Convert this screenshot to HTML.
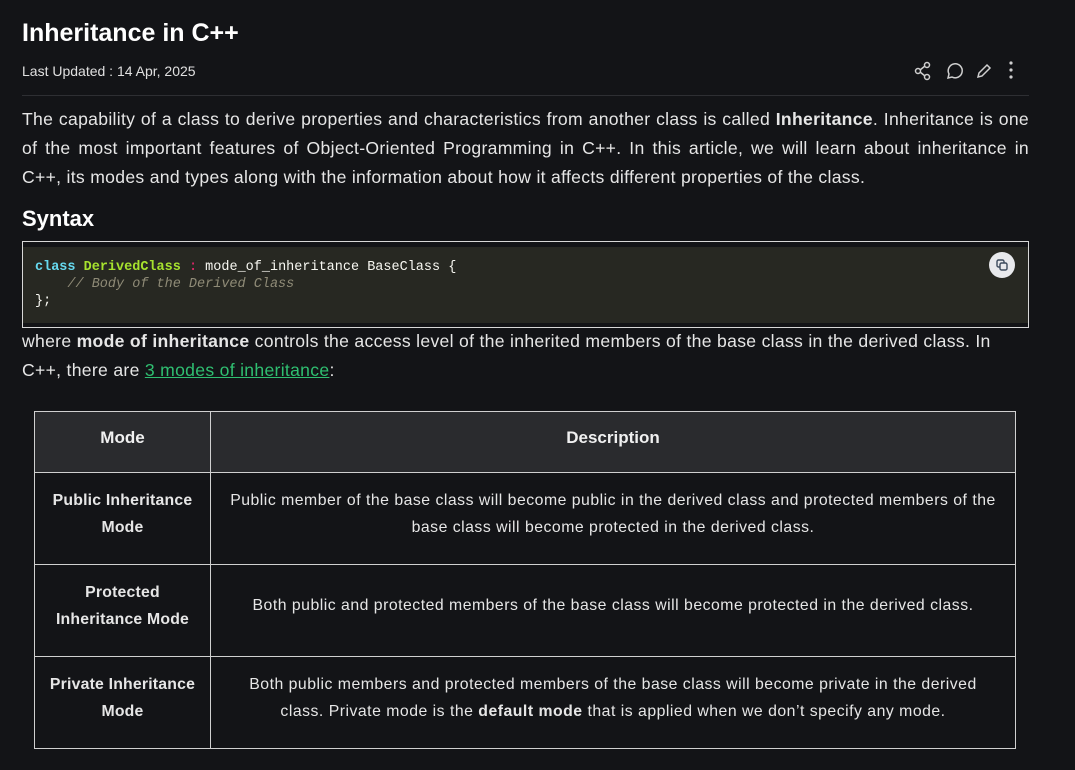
<!DOCTYPE html>
<html><head><meta charset="utf-8"><style>
*{margin:0;padding:0;box-sizing:border-box}
body{width:1075px;height:770px;background:#131417;color:#e8e8e8;font-family:"Liberation Sans",sans-serif;overflow:hidden;position:relative}
.abs{position:absolute}
h1{position:absolute;left:22px;top:19px;font-size:25px;font-weight:bold;color:#fff}
.date{left:22px;top:63px;font-size:14px;color:#e0e0e0}
.hr{left:22px;top:95px;width:1007px;height:1px;background:#2e2f33}
p{position:absolute;left:22px;width:1007px;font-size:17.6px;line-height:29px;color:#e6e6e6;letter-spacing:0.3px}
p span{display:block;text-align:justify;text-align-last:justify;white-space:nowrap}
p span.l{text-align-last:left}
h2{position:absolute;left:22px;top:206px;font-size:22px;font-weight:bold;color:#fff}
.code{left:22px;top:241px;width:1007px;height:87px;border:1px solid #d8d8d8;background:#131417}
.codein{position:absolute;left:0;right:0;top:5px;bottom:4px;background:#272822}
pre{position:absolute;left:12px;top:17px;font-family:"Liberation Mono",monospace;font-size:13.5px;line-height:17px;color:#f8f8f2}
.copy{left:989px;top:252px;width:26px;height:26px;border-radius:50%;background:#e8e9ec}
table{position:absolute;left:34px;top:411px;width:982px;border-collapse:collapse;font-size:15.8px}
td,th{border:1px solid #d0d0d0;text-align:center;line-height:27px;padding:0 6px}
th{background:#2a2b2e;height:61px;font-size:17px;color:#f0f0f0;padding-bottom:10px}
td{height:92px;color:#e6e6e6;letter-spacing:0.5px;white-space:nowrap;padding-bottom:10px}
td:first-child{font-weight:bold;width:176px;letter-spacing:0.2px}
a{color:#2fbf71;text-decoration:underline}
</style></head><body>
<h1>Inheritance in C++</h1>
<div class="abs date">Last Updated : 14 Apr, 2025</div>
<svg class="abs" style="left:914px;top:61px" width="110" height="20" viewBox="0 0 110 20">
<g fill="none" stroke="#cfcfcf" stroke-width="1.5">
<circle cx="4" cy="10" r="2.5"/><circle cx="13" cy="4" r="2.5"/><circle cx="13" cy="16" r="2.5"/><path d="M6 9 L11 5 M6 11 L11 15"/>
<path d="M34 17 L35 13 A7 7 0 1 1 38 16 Z"/>
<path d="M64 16 L65 12 L73 4 L76 7 L68 15 Z"/>
</g>
<g fill="#cfcfcf"><circle cx="97" cy="2" r="1.6"/><circle cx="97" cy="9" r="1.6"/><circle cx="97" cy="16" r="1.6"/></g>
</svg>
<div class="abs hr"></div>
<p style="top:105px"><span>The capability of a class to derive properties and characteristics from another class is called <b>Inheritance</b>. Inheritance is one</span><span>of the most important features of Object-Oriented Programming in C++. In this article, we will learn about inheritance in</span><span class="l">C++, its modes and types along with the information about how it affects different properties of the class.</span></p>
<h2>Syntax</h2>
<div class="abs code"><div class="codein"></div>
<pre><span style="color:#66d9ef;font-weight:bold">class</span> <span style="color:#a6e22e;font-weight:bold">DerivedClass</span> <span style="color:#f92672">:</span> mode_of_inheritance BaseClass {
    <i style="color:#8f8b77">// Body of the Derived Class</i>
};</pre></div>
<div class="abs copy"><svg width="26" height="26" viewBox="0 0 26 26" fill="none" stroke="#3c4a5c" stroke-width="1.4"><rect x="8" y="8" width="7" height="7" rx="1.5"/><rect x="11" y="11" width="7" height="7" rx="1.5" fill="#e8e9ec"/></svg></div>
<p style="top:327px"><span class="l">where <b>mode of inheritance</b> controls the access level of the inherited members of the base class in the derived class. In</span><span class="l">C++, there are <a>3 modes of inheritance</a>:</span></p>
<table>
<tr><th>Mode</th><th>Description</th></tr>
<tr><td>Public Inheritance<br>Mode</td><td>Public member of the base class will become public in the derived class and protected members of the<br>base class will become protected in the derived class.</td></tr>
<tr><td>Protected<br>Inheritance Mode</td><td>Both public and protected members of the base class will become protected in the derived class.</td></tr>
<tr><td>Private Inheritance<br>Mode</td><td>Both public members and protected members of the base class will become private in the derived<br>class. Private mode is the <b>default mode</b> that is applied when we don’t specify any mode.</td></tr>
</table>
</body></html>
